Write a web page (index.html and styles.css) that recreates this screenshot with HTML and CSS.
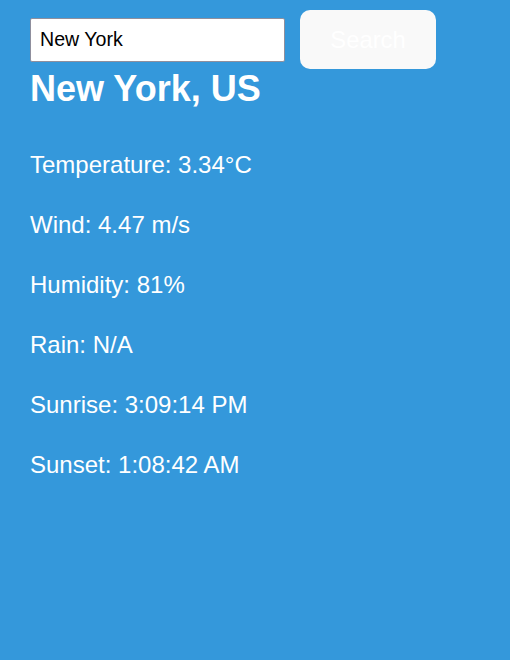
FILE: index.html
```html
<!DOCTYPE html>
<html lang="en">
<head>
<meta charset="utf-8">
<title>Weather</title>
<link rel="stylesheet" href="styles.css">
</head>
<body>
<div class="app">
  <form class="search-row">
    <input class="city-input" type="text" value="New York">
    <button class="search-btn" type="button">Search</button>
  </form>
  <h1 class="city-name">New York, US</h1>
  <div class="details">
    <p class="detail">Temperature: 3.34°C</p>
    <p class="detail">Wind: 4.47 m/s</p>
    <p class="detail">Humidity: 81%</p>
    <p class="detail">Rain: N/A</p>
    <p class="detail">Sunrise: 3:09:14 PM</p>
    <p class="detail">Sunset: 1:08:42 AM</p>
  </div>
</div>
</body>
</html>
```
FILE: styles.css
```css
html, body {
  margin: 0;
  padding: 0;
  height: 100%;
}
body {
  background: #3498db;
  font-family: "Liberation Sans", Arial, sans-serif;
  color: #ffffff;
}
.app {
  padding: 10px 30px 0 30px;
}
.search-row {
  display: flex;
  align-items: center;
  gap: 15px;
  margin: 0;
}
.city-input {
  box-sizing: border-box;
  width: 255px;
  height: 44px;
  margin: 0;
  padding: 0 9px;
  border: 1px solid #8f8f9d;
  border-radius: 2px;
  background: #ffffff;
  color: #000000;
  font-family: "Liberation Sans", Arial, sans-serif;
  font-size: 19.6px;
  outline: none;
}
.search-btn {
  box-sizing: border-box;
  width: 136px;
  height: 59px;
  margin: 0;
  padding: 0;
  border: none;
  border-radius: 10px;
  background: #f9f9f9;
  color: #ffffff;
  font-family: "Liberation Sans", Arial, sans-serif;
  font-size: 23.8px;
}
.city-name {
  margin: 0;
  font-size: 36px;
  line-height: 40px;
  font-weight: bold;
}
.details {
  display: flex;
  flex-direction: column;
  gap: 33px;
  padding-top: 42px;
}
.detail {
  margin: 0;
  font-size: 24px;
  line-height: 27px;
}
```
